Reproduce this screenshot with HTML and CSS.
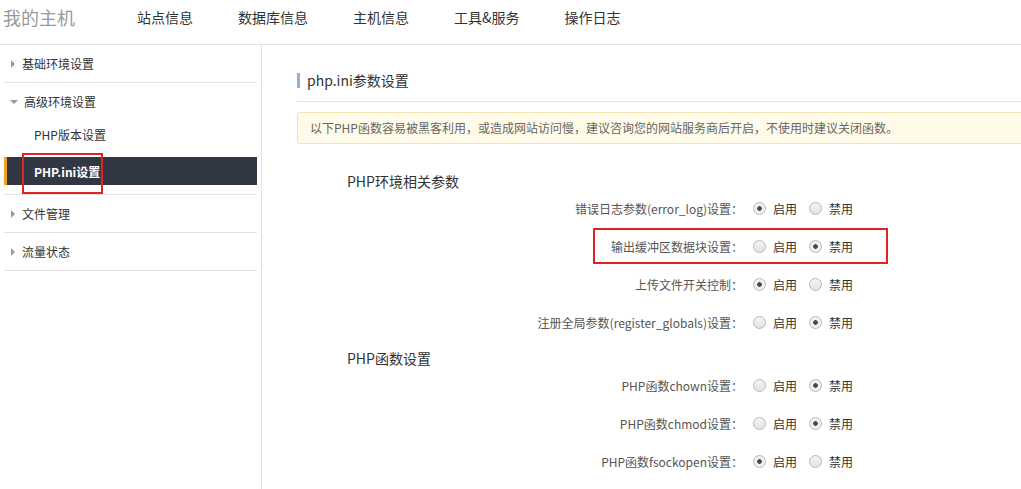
FILE: index.html
```html
<!DOCTYPE html>
<html lang="zh-CN">
    <head>
        <meta charset="UTF-8">
        <meta name="viewport" content="width=device-width, initial-scale=1.0">
        <title>我的主机 - php.ini参数设置</title>
        <link rel="stylesheet" href="styles.css">
    </head>
<body>
    <div class="topbar">
        <span class="logo">我的主机</span>
        <ul class="nav">
            <li>站点信息</li>
            <li>数据库信息</li>
            <li>主机信息</li>
            <li>工具&amp;服务</li>
            <li>操作日志</li>
        </ul>
    </div>

    <div class="layout">
        <div class="sidebar">
            <div class="menu-item"><span class="arrow"></span>基础环境设置</div>
            <div class="menu-group">
                <div class="menu-head"><span class="arrow open"></span>高级环境设置</div>
                <div class="sub-item">PHP版本设置</div>
                <div class="sub-item active">
                    <span class="mark-box side-mark"></span>
                    PHP.ini设置
                </div>
            </div>
            <div class="menu-item"><span class="arrow"></span>文件管理</div>
            <div class="menu-item"><span class="arrow"></span>流量状态</div>
        </div>

        <div class="main">
            <div class="page-title">php.ini参数设置</div>
            <div class="notice">以下PHP函数容易被黑客利用，或造成网站访问慢，建议咨询您的网站服务商后开启，不使用时建议关闭函数。</div>

            <h3 class="section-title">PHP环境相关参数</h3>
            <div class="form-row">
                <label class="row-label">错误日志参数(error_log)设置：</label>
                <div class="radio-group">
                    <input type="radio" name="error_log" id="r1" checked><label for="r1">启用</label>
                    <input type="radio" name="error_log" id="r2"><label for="r2">禁用</label>
                </div>
            </div>
            <div class="form-row">
                <span class="mark-box row-mark"></span>
                <label class="row-label">输出缓冲区数据块设置：</label>
                <div class="radio-group">
                    <input type="radio" name="output_buffering" id="r3"><label for="r3">启用</label>
                    <input type="radio" name="output_buffering" id="r4" checked><label for="r4">禁用</label>
                </div>
            </div>
            <div class="form-row">
                <label class="row-label">上传文件开关控制：</label>
                <div class="radio-group">
                    <input type="radio" name="file_uploads" id="r5" checked><label for="r5">启用</label>
                    <input type="radio" name="file_uploads" id="r6"><label for="r6">禁用</label>
                </div>
            </div>
            <div class="form-row">
                <label class="row-label">注册全局参数(register_globals)设置：</label>
                <div class="radio-group">
                    <input type="radio" name="register_globals" id="r7"><label for="r7">启用</label>
                    <input type="radio" name="register_globals" id="r8" checked><label for="r8">禁用</label>
                </div>
            </div>

            <h3 class="section-title second">PHP函数设置</h3>
            <div class="form-row">
                <label class="row-label">PHP函数chown设置：</label>
                <div class="radio-group">
                    <input type="radio" name="chown" id="r9"><label for="r9">启用</label>
                    <input type="radio" name="chown" id="r10" checked><label for="r10">禁用</label>
                </div>
            </div>
            <div class="form-row">
                <label class="row-label">PHP函数chmod设置：</label>
                <div class="radio-group">
                    <input type="radio" name="chmod" id="r11"><label for="r11">启用</label>
                    <input type="radio" name="chmod" id="r12" checked><label for="r12">禁用</label>
                </div>
            </div>
            <div class="form-row">
                <label class="row-label">PHP函数fsockopen设置：</label>
                <div class="radio-group">
                    <input type="radio" name="fsockopen" id="r13" checked><label for="r13">启用</label>
                    <input type="radio" name="fsockopen" id="r14"><label for="r14">禁用</label>
                </div>
            </div>
        </div>
    </div>
</body>
</html>
```

FILE: styles.css
```css
html, body {
    margin: 0;
    padding: 0;
    height: 100%;
    overflow: hidden;
}
body {
    font-family: "Microsoft YaHei", "Noto Sans CJK SC", sans-serif;
    font-size: 12px;
    color: #333;
    background-color: #fff;
}
ul {
    list-style: none;
    margin: 0;
    padding: 0;
}

/* top bar */
.topbar {
    display: flex;
    height: 44px;
    line-height: 34px;
    border-bottom: 1px solid #e1e1e1;
}
.logo {
    font-size: 18px;
    color: #999;
    padding-left: 3px;
}
.nav {
    display: flex;
    gap: 45px;
    margin-left: 62px;
    font-size: 14px;
    color: #333;
}

/* layout */
.layout {
    display: flex;
    height: calc(100% - 45px);
}
.sidebar {
    width: 262px;
    flex-shrink: 0;
    border-right: 1px solid #e1e1e1;
    box-sizing: border-box;
    padding: 0 4px;
}
.menu-item, .menu-head {
    display: flex;
    align-items: center;
    height: 37px;
    padding-left: 7px;
    font-size: 12px;
}
.menu-item {
    border-bottom: 1px solid #e1e1e1;
}
.menu-group {
    border-bottom: 1px solid #e1e1e1;
    padding-bottom: 9px;
}
.arrow {
    width: 0;
    height: 0;
    border-top: 4px solid transparent;
    border-bottom: 4px solid transparent;
    border-left: 4px solid #999;
    margin-right: 7px;
}
.arrow.open {
    border-left: 4px solid transparent;
    border-right: 4px solid transparent;
    border-top: 4px solid #999;
    border-bottom: 0;
    margin-right: 6px;
    margin-left: -1px;
}
.sub-item {
    position: relative;
    display: flex;
    align-items: center;
    height: 28px;
    padding-left: 30px;
    margin-bottom: 9px;
}
.sub-item:last-child {
    margin-bottom: 0;
}
.sub-item.active {
    background-color: #323843;
    color: #fff;
    font-weight: bold;
    border-left: 3px solid #f0a020;
    padding-left: 27px;
}

/* red annotation frames */
.mark-box {
    position: absolute;
    border: 2px solid #e02424;
    box-sizing: border-box;
}
.side-mark {
    left: 15px;
    top: -4px;
    width: 81px;
    height: 41px;
}
.row-mark {
    left: 296px;
    top: 1px;
    width: 295px;
    height: 36px;
}

/* main */
.main {
    flex: 1;
    padding-left: 35px;
    overflow: hidden;
}
.page-title {
    position: relative;
    font-size: 14px;
    height: 56px;
    line-height: 70px;
    padding-left: 10px;
    border-bottom: 1px solid #e1e1e1;
}
.page-title::before {
    content: "";
    position: absolute;
    left: 0;
    top: 28px;
    width: 3px;
    height: 15px;
    background-color: #8fb4d6;
}
.notice {
    margin-top: 10px;
    margin-right: -10px;
    height: 30px;
    line-height: 30px;
    padding-left: 12px;
    background-color: #fffbe8;
    border: 1px solid #f5e5b5;
    border-radius: 3px;
    color: #666;
    font-size: 12px;
    white-space: nowrap;
}
.section-title {
    margin: 0;
    padding-left: 50px;
    font-size: 14px;
    font-weight: normal;
    color: #333;
    margin-top: 29px;
    line-height: 16px;
}
.section-title.second {
    margin-top: 9px;
}
.form-row {
    position: relative;
    display: flex;
    align-items: center;
    height: 38px;
}
.row-label {
    width: 446px;
    text-align: right;
    color: #555;
}
.radio-group {
    display: flex;
    align-items: center;
    margin-left: 10px;
}
.radio-group input[type="radio"] {
    -webkit-appearance: none;
    appearance: none;
    width: 13px;
    height: 13px;
    margin: 0 7px 0 0;
    border: 1px solid #b8b8b8;
    border-radius: 50%;
    background: linear-gradient(#f4f4f4, #e2e2e2);
    box-sizing: border-box;
}
.radio-group input[type="radio"]:checked {
    background: radial-gradient(circle, #4a4a4a 0, #4a4a4a 2px, #f0f0f0 2.6px);
}
.radio-group label {
    margin-right: 12px;
    color: #333;
}
```
